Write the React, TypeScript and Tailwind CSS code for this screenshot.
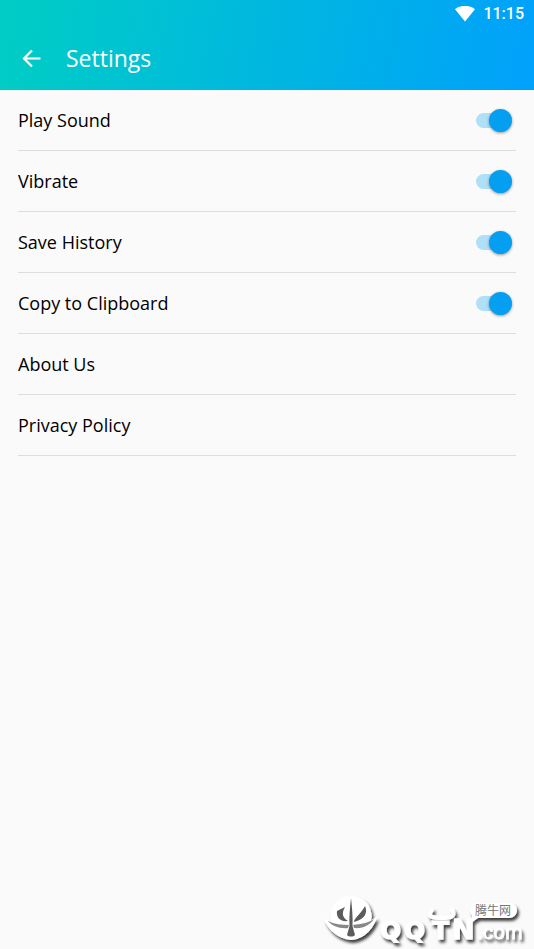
import { useState } from "react";

const toggles = [
  { id: "sound", label: "Play Sound" },
  { id: "vibrate", label: "Vibrate" },
  { id: "history", label: "Save History" },
  { id: "clipboard", label: "Copy to Clipboard" },
];

const links = [
  { id: "about", label: "About Us" },
  { id: "privacy", label: "Privacy Policy" },
];

const StatusBar = () => {
  return (
    <div className="flex h-7 items-center justify-end gap-2 pr-[10px]">
      <svg className="h-4 w-5" viewBox="0 0 20 16" fill="#fff" aria-hidden="true">
        <path d="M0 3.2C5.6-1.3 14.4-1.3 20 3.2L10 15.400z" />
      </svg>
      <span className="font-['Roboto',sans-serif] text-base font-medium leading-5">
        11:15
      </span>
    </div>
  );
};

const Header = () => {
  return (
    <header className="bg-[linear-gradient(100deg,#00cec4,#00a1fb)] text-white">
      <StatusBar />
      <div className="flex h-[62px] items-center gap-[22px] pb-0.5 pl-5">
        <button type="button" aria-label="Back" className="cursor-pointer">
          <svg className="h-6 w-6" viewBox="0 0 24 24" fill="none" stroke="#fff" strokeWidth="2.200" aria-hidden="true">
            <path d="M20.500 12.500H4.500M12 4.500L4 12.500l8 8" />
          </svg>
        </button>
        <h1 className="text-[23px] leading-7">Settings</h1>
      </div>
    </header>
  );
};

const Watermark = () => {
  return (
    <svg className="absolute bottom-0 right-0 h-16 w-[214px]" viewBox="0 0 214 64" aria-hidden="true">
      <defs>
        <filter id="logoShadow" x="-10%" y="-20%" width="125%" height="150%">
          <feDropShadow dx="2" dy="3" stdDeviation="1.8" floodColor="#000" floodOpacity="0.75" />
        </filter>
        <filter id="soft">
          <feGaussianBlur stdDeviation="0.6" />
        </filter>
      </defs>
      <g filter="url(#logoShadow)" fill="#fff">
        <path d="M31 11C42 11 50 18 51 27C52 30 52 32 51 35L57 32C54 43 45 54 31 55C18 54 8 45 4 34L11 36C9 22 18 11 31 11z" />
        <path d="M112 25C106 32 114 33 121 33C129 33 137 32 132 25" fill="none" stroke="#fff" strokeWidth="4" strokeLinecap="round" />
        <path d="M157 18H190C200 19 199 33 189 33H158L152 37L152 30C148 26 151 19 157 18z" />
        <g fontWeight="700" fontFamily="'DejaVu Sans', sans-serif" stroke="#fff" strokeWidth="1">
          <text x="60" y="54" fontSize="25">Q</text>
          <text x="84" y="54" fontSize="25">Q</text>
          <text x="112" y="54" fontSize="25">T</text>
          <text x="132" y="54" fontSize="27">N</text>
        </g>
        <text x="157" y="54" fontSize="21" stroke="#fff" strokeWidth="0.5" fontFamily="'Liberation Sans', sans-serif">.com</text>
      </g>
      <g fill="#5c5c5c" filter="url(#soft)">
        <path d="M31 13C32 22 33 32 32.500 41L35 50C33 52 29 52 27 50L29.500 41C29 32 30 22 31 13z" />
        <path d="M17 26L25 22C21 29 23 33 28 36C21 37 16 33 17 26z" />
        <path d="M45 21C48 28 45 34 34 37C34 33 41 29 45 21z" />
        <path d="M8 36C14 39 22 40 29 40L28 43C20 44 12 41 8 36zM54 34C48 38 41 39 33 40L34 43C43 44 50 40 54 34z" fill="#888" />
      </g>
      <text x="155" y="30" fontSize="12" fill="#777" fontFamily="'Noto Sans CJK SC', sans-serif">腾牛网</text>
    </svg>
  );
};

const App = () => {
  const [values, setValues] = useState<Record<string, boolean>>({
    sound: true,
    vibrate: true,
    history: true,
    clipboard: true,
  });

  const handleToggle = (id: string) => {
    setValues({ ...values, [id]: !values[id] });
  };

  return (
    <div className="relative min-h-screen bg-[#fafafa] font-['Open_Sans',sans-serif]">
      <Header />
      <main className="px-[18px] text-lg text-black">
        {toggles.map((item) => (
          <label
            key={item.id}
            htmlFor={item.id}
            className="flex h-[61px] cursor-pointer items-center justify-between border-b border-[#dedede] pr-1"
          >
            <span>{item.label}</span>
            <input
              id={item.id}
              type="checkbox"
              role="switch"
              checked={values[item.id]}
              onChange={() => handleToggle(item.id)}
              className="relative h-[15px] w-9 cursor-pointer appearance-none rounded-full bg-gray-300 before:absolute before:-top-1 before:left-0 before:h-[23px] before:w-[23px] before:rounded-full before:bg-white before:shadow-[0_1px_3px_rgba(0,0,0,0.4)] checked:bg-[#b0dff8] checked:before:left-[13px] checked:before:bg-[#049ff1]"
            />
          </label>
        ))}
        {links.map((item) => (
          <a
            key={item.id}
            href={`#${item.id}`}
            className="flex h-[61px] items-center border-b border-[#dedede]"
          >
            {item.label}
          </a>
        ))}
      </main>
      <Watermark />
    </div>
  );
};

export default App;
